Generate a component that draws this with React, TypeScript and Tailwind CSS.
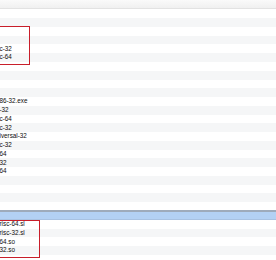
import React from "react";

// visible tail of each file name (the name column is scrolled off to the left)
const rows: { name: string; selected?: boolean }[] = [
  { name: "" },
  { name: "" },
  { name: "" },
  { name: "" },
  { name: "c-32" },
  { name: "c-64" },
  { name: "" },
  { name: "" },
  { name: "" },
  { name: "" },
  { name: "86-32.exe" },
  { name: "-32" },
  { name: "c-64" },
  { name: "c-32" },
  { name: "iversal-32" },
  { name: "c-32" },
  { name: "64" },
  { name: "32" },
  { name: "64" },
  { name: "" },
  { name: "" },
  { name: "" },
  { name: "" },
  { name: "", selected: true },
  { name: "risc-64.sl" },
  { name: "risc-32.sl" },
  { name: "64.so" },
  { name: "32.so" },
];

export default function App() {
  return (
    <div
      className="relative w-[276px] h-[260px] overflow-hidden bg-white text-[#0c0c0c]"
      style={{ fontFamily: '"Liberation Sans", Arial, sans-serif' }}
    >
      <div className="h-[9.4px] bg-gradient-to-b from-[#fafafa] to-[#f0f0f0] border-b border-[#e2e2e2]" />

      <ul className="flex flex-col">
        {rows.map((row, i) => (
          <li
            key={i}
            className={
              row.selected
                ? "h-[10.4px] -my-[0.8px] flex items-center bg-[#b3d1f4] border-t-2 border-b-2 border-t-[#9eabbb] border-b-[#a8c2e2]"
                : i % 2 === 1
                ? "h-[8.78px] flex items-center bg-[#f5f6f7]"
                : "h-[8.78px] flex items-center bg-white"
            }
          >
            <span className="text-[6.3px] leading-none whitespace-nowrap -ml-[0.5px]">
              {row.name}
            </span>
          </li>
        ))}
      </ul>

      {/* annotation boxes */}
      <div className="absolute left-[-4px] top-[26px] w-[34px] h-[39px] border-[1.6px] border-[#c81e2a]" />
      <div className="absolute left-[-4px] top-[220px] w-[44px] h-[38px] border-[1.6px] border-[#c81e2a]" />
    </div>
  );
}
